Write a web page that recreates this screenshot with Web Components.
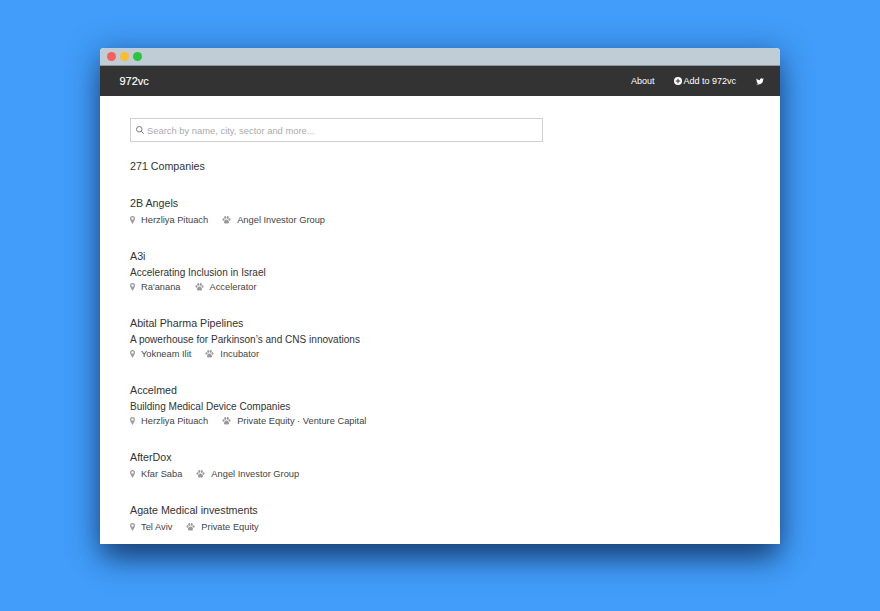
<!DOCTYPE html>
<html>
<head>
<meta charset="utf-8">
<title>972vc</title>
<style>
  html, body { margin: 0; height: 100%; }
  body {
    background: #419df9;
    font-family: "Liberation Sans", Arial, sans-serif;
    overflow: hidden;
    padding: 49px 100px 0;
    box-sizing: border-box;
  }
</style>
</head>
<body>
<browser-window>
  <top-nav slot="nav"></top-nav>
  <search-box></search-box>
  <company-count>271 Companies</company-count>
  <company-item name="2B Angels" city="Herzliya Pituach" sector="Angel Investor Group"></company-item>
  <company-item name="A3i" tagline="Accelerating Inclusion in Israel" city="Ra'anana" sector="Accelerator"></company-item>
  <company-item name="Abital Pharma Pipelines" tagline="A powerhouse for Parkinson’s and CNS innovations" city="Yokneam Ilit" sector="Incubator"></company-item>
  <company-item name="Accelmed" tagline="Building Medical Device Companies" city="Herzliya Pituach" sector="Private Equity · Venture Capital"></company-item>
  <company-item name="AfterDox" city="Kfar Saba" sector="Angel Investor Group"></company-item>
  <company-item name="Agate Medical investments" city="Tel Aviv" sector="Private Equity"></company-item>
</browser-window>

<script>
class BrowserWindow extends HTMLElement {
  connectedCallback() {
    const shadow = this.attachShadow({ mode: "open" });
    shadow.innerHTML = `
    <style>
      :host {
        display: block;
        width: 680px;
        height: 496px;
        margin-top: -1px;
        box-shadow: 0 4px 30px rgba(20, 50, 100, 0.5), 0 18px 26px -4px rgba(15, 40, 80, 0.65);
        border-radius: 4px 4px 0 0;
        background: #fff;
      }
      .bar {
        height: 18px;
        background: #c0ccd6;
        border-radius: 4px 4px 0 0;
        display: flex;
        align-items: center;
        gap: 4.3px;
        padding-left: 6.5px;
        box-sizing: border-box;
        border-bottom: 1px solid #8f979e;
      }
      .dot { width: 9px; height: 9px; border-radius: 50%; }
      .content { padding: 22px 30px 0; height: 448px; overflow: hidden; box-sizing: border-box; }
    </style>
    <div class="bar">
      <span class="dot" style="background:#f95f58"></span>
      <span class="dot" style="background:#fbbc2f"></span>
      <span class="dot" style="background:#29c53f"></span>
    </div>
    <slot name="nav"></slot>
    <div class="content"><slot></slot></div>
    `;
  }
}

class TopNav extends HTMLElement {
  connectedCallback() {
    const shadow = this.attachShadow({ mode: "open" });
    shadow.innerHTML = `
    <style>
      :host {
        display: flex;
        align-items: center;
        height: 30px;
        background: #333;
        color: #fff;
        padding: 0 16px 0 19.5px;
        font-size: 9px;
      }
      .brand { font-size: 11px; flex: 1; -webkit-text-stroke: 0.15px #fff; }
      .links { display: flex; align-items: center; }
      .about { margin-right: 20px; }
      .add { display: flex; align-items: center; gap: 1px; margin-right: 20px; }
      svg { display: block; }
    </style>
    <div class="brand">972vc</div>
    <div class="links">
      <span class="about">About</span>
      <span class="add">
        <svg width="8" height="8" viewBox="0 0 16 16"><circle cx="8" cy="8" r="8" fill="#fff"/><path d="M7 3.5h2V7h3.5v2H9v3.5H7V9H3.5V7H7z" fill="#333"/></svg>
        Add to 972vc
      </span>
      <svg width="8" height="7" viewBox="0 0 24 20"><path fill="#fff" d="M24 2.4c-.9.4-1.8.7-2.8.8 1-.6 1.8-1.6 2.2-2.7-1 .6-2 1-3.1 1.2C19.3.7 18 0 16.6 0c-2.700 0-4.900 2.200-4.900 4.900 0 .4 0 .8.100 1.100C7.700 5.800 4.100 3.900 1.700.900c-.4.700-.7 1.600-.7 2.500 0 1.700.9 3.200 2.200 4.100-.8 0-1.600-.2-2.200-.6v.1c0 2.400 1.700 4.400 3.900 4.800-.4.1-.8.2-1.300.2-.3 0-.6 0-.9-.1.600 2 2.400 3.400 4.600 3.400-1.700 1.300-3.800 2.100-6.100 2.100-.4 0-.8 0-1.200-.1C2.200 18.300 4.800 19.100 7.500 19.100c9.100 0 14-7.500 14-14v-.6c1-.7 1.800-1.500 2.500-2.100z"/></svg>
    </div>
    `;
  }
}

class SearchBox extends HTMLElement {
  connectedCallback() {
    const shadow = this.attachShadow({ mode: "open" });
    shadow.innerHTML = `
    <style>
      :host {
        display: flex;
        align-items: center;
        gap: 3px;
        width: 413px;
        height: 24px;
        box-sizing: border-box;
        border: 1px solid #d0d0d0;
        padding-left: 5px;
        color: #aaa;
        font-size: 9.4px;
      }
      svg { display: block; }
    </style>
    <svg width="8" height="8" viewBox="0 0 16 16" fill="none" stroke="#777" stroke-width="2"><circle cx="6.500" cy="6.500" r="5.500"/><path d="M10.500 10.500L15.500 15.500"/></svg>
    <span>Search by name, city, sector and more...</span>
    `;
  }
}

class CompanyCount extends HTMLElement {
  connectedCallback() {
    const shadow = this.attachShadow({ mode: "open" });
    shadow.innerHTML = `
    <style>
      :host { display: block; margin-top: 17px; margin-bottom: 23px; font-size: 10.7px; line-height: 14px; color: #333; }
    </style>
    <slot></slot>
    `;
  }
}

class CompanyItem extends HTMLElement {
  connectedCallback() {
    const shadow = this.attachShadow({ mode: "open" });
    const tagline = this.getAttribute("tagline");
    shadow.innerHTML = `
    <style>
      :host { display: block; margin-bottom: 23px; color: #333; }
      .name { font-size: 10.7px; line-height: 14px; }
      .tagline { font-size: 10.05px; line-height: 14px; margin-top: 3px; margin-bottom: -3px; }
      .meta { display: flex; align-items: center; font-size: 9.3px; line-height: 12px; margin-top: 4px; color: #444; }
      .city { margin: 0 14px 0 6px; }
      .sector { margin-left: 6px; }
      svg { display: block; flex: none; }
    </style>
    <div class="name">${this.getAttribute("name")}</div>
    ${tagline ? `<div class="tagline">${tagline}</div>` : ""}
    <div class="meta">
      <svg width="5" height="8" viewBox="0 0 10 16"><path fill="#999" fill-rule="evenodd" d="M5 0a5 5 0 0 1 5 5c0 3-3 7-5 11C3 12 0 8 0 5a5 5 0 0 1 5-5zm0 2.500a2.500 2.500 0 1 0 0 5 2.500 2.500 0 0 0 0-5z"/></svg>
      <span class="city">${this.getAttribute("city")}</span>
      <svg width="9" height="8" viewBox="0 0 18 16" fill="#999"><ellipse cx="3" cy="7" rx="2" ry="2.500"/><ellipse cx="6.500" cy="3" rx="2" ry="2.800"/><ellipse cx="11.500" cy="3" rx="2" ry="2.800"/><ellipse cx="15" cy="7" rx="2" ry="2.500"/><path d="M9 7c3 0 5.500 4 5 6.500-.5 2-3 1.500-5 1-2 .5-4.500 1-5-1C3.500 11 6 7 9 7z"/></svg>
      <span class="sector">${this.getAttribute("sector")}</span>
    </div>
    `;
  }
}

customElements.define("browser-window", BrowserWindow);
customElements.define("top-nav", TopNav);
customElements.define("search-box", SearchBox);
customElements.define("company-count", CompanyCount);
customElements.define("company-item", CompanyItem);
</script>
</body>
</html>
